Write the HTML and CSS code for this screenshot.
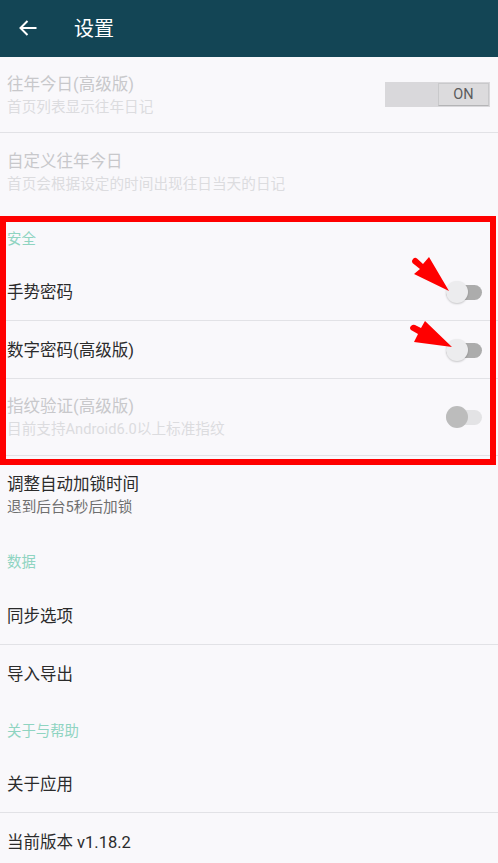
FILE: index.html
```html
<!DOCTYPE html>
<html lang="zh-CN">
  <head>
    <meta charset="UTF-8" />
    <meta name="viewport" content="width=device-width, initial-scale=1.0" />
    <title>设置</title>
    <link rel="stylesheet" href="styles.css">
  </head>
  <body>
    <div class="screen">
      <header class="toolbar">
        <svg class="back-icon" width="20" height="18" viewBox="0 0 20 18">
          <path d="M18.5 9H2.5M9.5 2 2.5 9l7 7" />
        </svg>
        <h1>设置</h1>
      </header>

      <div class="row row-two row-first line disabled">
        <div class="row-text">
          <div class="row-title">往年今日(高级版)</div>
          <div class="row-sub">首页列表显示往年日记</div>
        </div>
        <div class="on-off"><span>ON</span></div>
      </div>
      <div class="row row-two disabled">
        <div class="row-text">
          <div class="row-title">自定义往年今日</div>
          <div class="row-sub">首页会根据设定的时间出现往日当天的日记</div>
        </div>
      </div>

      <div class="section-head">安全</div>
      <div class="row row-short line">
        <div class="row-title">手势密码</div>
        <div class="switch"><i></i></div>
      </div>
      <div class="row line">
        <div class="row-title">数字密码(高级版)</div>
        <div class="switch"><i></i></div>
      </div>
      <div class="row row-two line disabled">
        <div class="row-text">
          <div class="row-title">指纹验证(高级版)</div>
          <div class="row-sub">目前支持Android6.0以上标准指纹</div>
        </div>
        <div class="switch switch-off"><i></i></div>
      </div>
      <div class="row row-two">
        <div class="row-text">
          <div class="row-title">调整自动加锁时间</div>
          <div class="row-sub">退到后台5秒后加锁</div>
        </div>
      </div>

      <div class="section-head">数据</div>
      <div class="row line"><div class="row-title">同步选项</div></div>
      <div class="row row-short"><div class="row-title">导入导出</div></div>

      <div class="section-head">关于与帮助</div>
      <div class="row row-short line"><div class="row-title">关于应用</div></div>
      <div class="row row-short"><div class="row-title">当前版本 v1.18.2</div></div>

      <!-- annotations on top of the screenshot -->
      <div class="red-box"></div>
      <svg class="arrow arrow-1" width="44" height="40" viewBox="0 0 44 40">
        <path d="M2.5 9Q1 7 3 5 5 3 7 4.5L13 10 19 3 39 37 4 20 10 15Z" />
      </svg>
      <svg class="arrow arrow-2" width="46" height="32" viewBox="0 0 46 32">
        <path d="M3 12Q1 10 3 8 5 6 7 7L13 10 17 3 44 29 6 24 10 16Z" />
      </svg>
    </div>
  </body>
</html>
```

FILE: styles.css
```css
* {
  box-sizing: border-box;
}
body {
  margin: 0;
  background-color: #f9f8fb;
  font-family: "Roboto", "Noto Sans CJK SC", sans-serif;
}
.screen {
  position: relative;
  width: 498px;
  height: 863px;
  overflow: hidden;
  color: #2b2b2b;
}
.toolbar {
  display: flex;
  align-items: center;
  height: 57px;
  padding: 0 0 2px 18px;
  background-color: #134555;
}
.toolbar h1 {
  margin: 0 0 0 36px;
  font-size: 20px;
  font-weight: 400;
  color: #fff;
}
.back-icon {
  fill: none;
  stroke: #fff;
  stroke-width: 2;
}
.section-head {
  display: flex;
  align-items: center;
  height: 54px;
  padding-left: 7px;
  font-size: 14.4px;
  color: #8fd4c1;
}
.row {
  display: flex;
  align-items: center;
  justify-content: space-between;
  height: 58px;
  padding: 2px 16px 0 7px;
}
.row.line {
  border-bottom: 1px solid #e2e2e6;
}
.row.row-short {
  height: 57px;
}
.row.row-two {
  height: 77px;
}
.row.row-first {
  height: 76px;
}
.row-title {
  font-size: 16.5px;
  line-height: 22px;
}
.row-sub {
  font-size: 14.65px;
  line-height: 22px;
  color: #6f6f6f;
}
.disabled .row-title {
  color: #c8c8cb;
}
.disabled .row-sub {
  color: #dcdcdf;
}
.on-off {
  display: flex;
  justify-content: flex-end;
  width: 105px;
  height: 25px;
  margin: 0 -8px 3px 0;
  padding: 1px;
  background-color: #d9d8db;
}
.on-off span {
  width: 51px;
  font-size: 14.5px;
  line-height: 22px;
  text-align: center;
  color: #5c5c5e;
  background-color: #dcdbdd;
  border: 1px solid #c9c9cb;
  border-bottom-color: #b4b4b6;
}
.switch {
  position: relative;
  width: 36px;
  height: 15px;
  margin-bottom: 1px;
  border-radius: 8px;
  background-color: #acacac;
}
.switch i {
  position: absolute;
  left: 0;
  top: -4px;
  width: 22px;
  height: 22px;
  border-radius: 50%;
  background-color: #ececee;
  box-shadow: 0 1px 2px rgba(0, 0, 0, 0.2);
}
.switch-off {
  background-color: #e3e3e5;
}
.switch-off i {
  background-color: #bcbcbc;
  box-shadow: none;
}
.red-box {
  position: absolute;
  left: 0;
  top: 216px;
  width: 496px;
  height: 249px;
  border: 6px solid #ff0000;
}
.arrow {
  position: absolute;
  fill: #ff0000;
}
.arrow-1 {
  left: 410px;
  top: 254px;
}
.arrow-2 {
  left: 408px;
  top: 318px;
}
```
